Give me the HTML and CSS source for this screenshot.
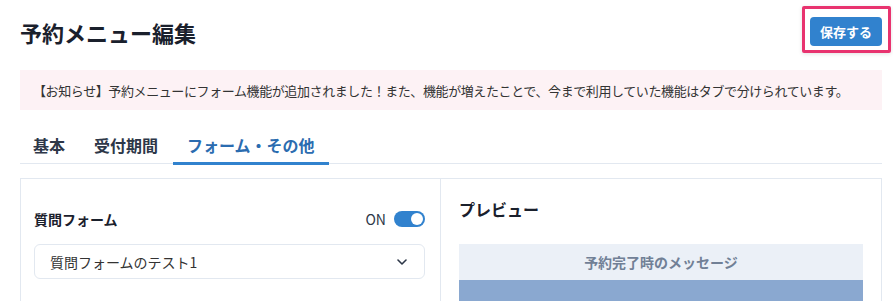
FILE: index.html
```html
<!DOCTYPE html>
<html lang="ja">
<head>
<meta charset="utf-8">
<title>予約メニュー編集</title>
<link rel="stylesheet" href="styles.css">
</head>
<body>
<div class="page">
  <header class="header">
    <h1 class="title">予約メニュー編集</h1>
    <div class="save-wrap">
      <button class="save-btn" type="button">保存する</button>
    </div>
  </header>

  <div class="notice">【お知らせ】予約メニューにフォーム機能が追加されました！また、機能が増えたことで、今まで利用していた機能はタブで分けられています。</div>

  <nav class="tabs">
    <div class="tab">基本</div>
    <div class="tab">受付期間</div>
    <div class="tab tab-active">フォーム・その他</div>
  </nav>

  <section class="panel">
    <div class="col-left">
      <div class="field-row">
        <span class="field-label">質問フォーム</span>
        <span class="toggle-wrap">
          <span class="toggle-text">ON</span>
          <span class="toggle"><span class="knob"></span></span>
        </span>
      </div>
      <div class="select">
        <span class="select-text">質問フォームのテスト1</span>
        <svg class="chevron" width="10" height="6" viewBox="0 0 10 6"><path d="M1 1l4 4 4-4" fill="none" stroke="#2d3748" stroke-width="1.6" stroke-linecap="round" stroke-linejoin="round"/></svg>
      </div>
    </div>
    <div class="col-right">
      <h2 class="preview-title">プレビュー</h2>
      <div class="preview-box">
        <div class="preview-head">予約完了時のメッセージ</div>
        <div class="preview-body"></div>
      </div>
    </div>
  </section>
</div>
</body>
</html>
```

FILE: styles.css
```css
html, body {
  margin: 0;
  padding: 0;
  overflow: hidden;
  background: #ffffff;
}
body {
  font-family: "Noto Sans CJK JP", "Noto Sans", sans-serif;
  color: #2d3748;
}
.page {
  padding: 0 11px 0 20px;
}
.header {
  display: flex;
  justify-content: space-between;
  align-items: center;
  padding-top: 17px;
  height: 29px;
}
.title {
  margin: 0;
  font-size: 22px;
  line-height: 29px;
  font-weight: 700;
  color: #1a202c;
  position: relative;
  top: 1px;
}
.save-wrap {
  position: relative;
}
.save-wrap::before {
  content: "";
  position: absolute;
  top: -11px;
  left: -8px;
  right: -9px;
  bottom: -7px;
  border: 3px solid #e8336f;
  border-radius: 2px;
  box-shadow: 0 1px 4px rgba(0,0,0,0.12);
  pointer-events: none;
}
.save-btn {
  display: block;
  width: 72px;
  height: 29px;
  border: 0;
  border-radius: 4px;
  background: #3182ce;
  color: #ffffff;
  font-family: inherit;
  font-size: 13px;
  font-weight: 700;
  padding: 0;
}
.notice {
  margin-top: 24px;
  height: 40px;
  display: flex;
  align-items: center;
  padding: 0 13px;
  background: #fdf2f5;
  font-size: 13px;
  color: #333;
  white-space: nowrap;
  letter-spacing: -0.4px;
}
.tabs {
  display: flex;
  gap: 1px;
  margin-top: 16px;
  border-bottom: 1px solid #e2e8f0;
}
.tab {
  padding: 7px 14px 5px;
  line-height: 24px;
  font-size: 16px;
  font-weight: 700;
  color: #2d3748;
  border-bottom: 3px solid transparent;
  margin-bottom: -2px;
}
.tab:first-child {
  padding-left: 13px;
}
.tab-active {
  color: #2b6cb0;
  border-bottom-color: #3182ce;
}
.panel {
  margin-top: 14px;
  border: 1px solid #e2e8f0;
  display: grid;
  grid-template-columns: 420px 1fr;
  height: 200px;
}
.col-left {
  border-right: 1px solid #e2e8f0;
  padding: 30px 15px 0 13px;
}
.field-row {
  display: flex;
  justify-content: space-between;
  align-items: center;
  height: 20px;
}
.field-label {
  font-size: 14px;
  font-weight: 700;
  line-height: 20px;
  color: #1a202c;
}
.toggle-wrap {
  display: flex;
  align-items: center;
  gap: 8px;
}
.toggle-text {
  font-size: 14px;
  line-height: 20px;
  color: #2d3748;
}
.toggle {
  width: 31px;
  height: 16px;
  border-radius: 8px;
  background: #3182ce;
  display: flex;
  align-items: center;
  justify-content: flex-end;
  padding: 0 2px;
  box-sizing: border-box;
}
.knob {
  width: 12px;
  height: 12px;
  border-radius: 50%;
  background: #ffffff;
}
.select {
  margin-top: 15px;
  height: 35px;
  box-sizing: border-box;
  border: 1px solid #e2e8f0;
  border-radius: 6px;
  display: flex;
  align-items: center;
  justify-content: space-between;
  padding: 0 17px 0 15px;
}
.select-text {
  font-size: 14px;
  color: #333;
}
.chevron {
  display: block;
}
.col-right {
  padding: 18px 18px 0;
}
.preview-title {
  margin: 0;
  font-size: 16px;
  line-height: 24px;
  font-weight: 700;
  color: #1a202c;
}
.preview-box {
  margin-top: 23px;
}
.preview-head {
  height: 36px;
  background: #ebf0f7;
  display: flex;
  align-items: center;
  justify-content: center;
  font-size: 14px;
  font-weight: 700;
  color: #718096;
}
.preview-body {
  height: 60px;
  background: #8aa8d0;
}
```
